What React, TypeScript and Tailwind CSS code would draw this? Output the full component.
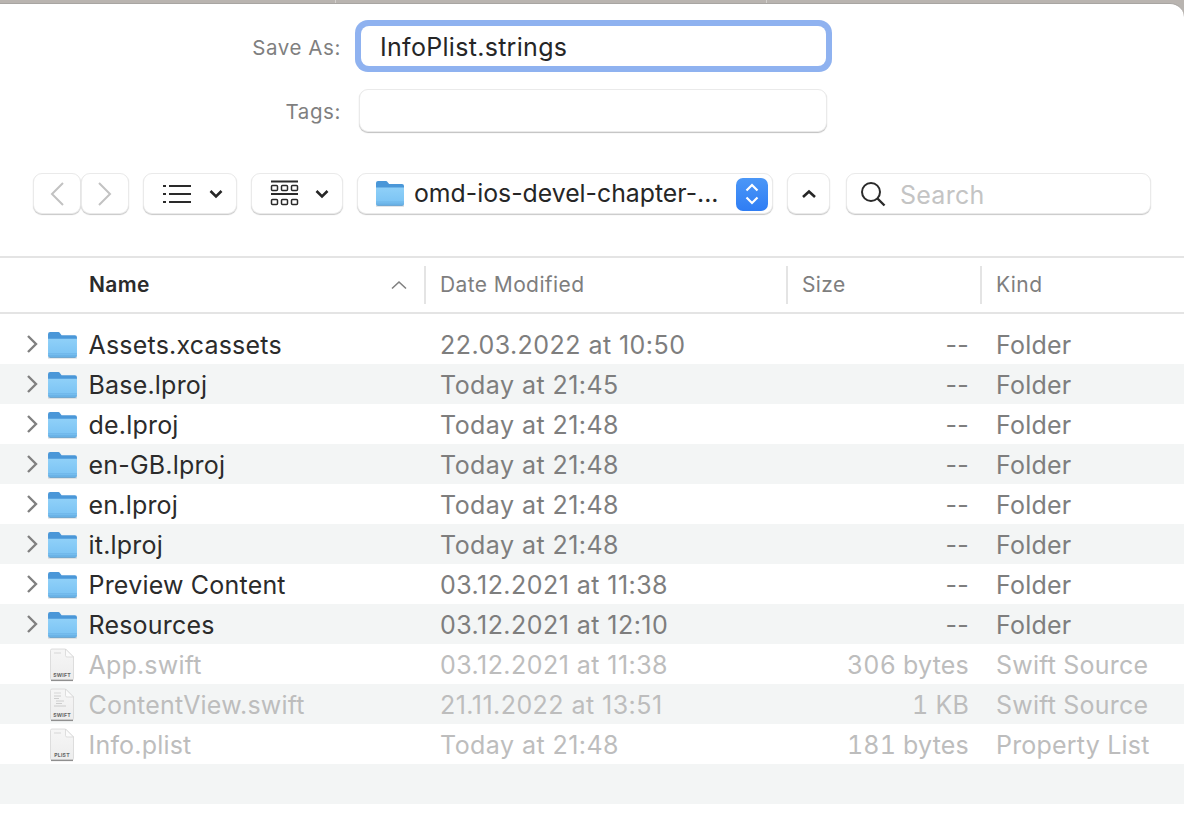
import React from "react";

const font = { fontFamily: "Inter, 'Liberation Sans', sans-serif" };

function Folder({ w = 31, h = 28 }: { w?: number; h?: number }) {
  return (
    <svg width={w} height={h} viewBox="0 0 30 27" className="shrink-0">
      <defs>
        <linearGradient id="fbody" x1="0" y1="0" x2="0" y2="1">
          <stop offset="0" stopColor="#8fd0f8" />
          <stop offset="0.8" stopColor="#7cc4f4" />
          <stop offset="1" stopColor="#62ace2" />
        </linearGradient>
      </defs>
      <path d="M1 5V3a2 2 0 0 1 2-2h7.5c1 0 1.5.4 2 1l1.6 2H27a2 2 0 0 1 2 2v3H1z" fill="#4a97d8" />
      <path d="M1 7.5h28V24a2 2 0 0 1-2 2H3a2 2 0 0 1-2-2z" fill="url(#fbody)" />
      <path d="M1 22h28M1 24h28" stroke="#5ea6dd" strokeWidth="0.7" opacity="0.7" />
      <path d="M1 26h28" stroke="#8d98a3" strokeWidth="0.8" opacity="0.6" />
    </svg>
  );
}

function FileIcon({ label, lines }: { label: string; lines: number }) {
  return (
    <svg width="26" height="34" viewBox="0 0 26 34" className="shrink-0">
      <defs>
        <linearGradient id="fpage" x1="0" y1="0" x2="0" y2="1">
          <stop offset="0" stopColor="#f6f6f6" />
          <stop offset="1" stopColor="#ededed" />
        </linearGradient>
      </defs>
      <path d="M1.5 2.5A1.5 1.5 0 0 1 3 1h13.5L24.5 9v21.5a1.5 1.5 0 0 1-1.5 1.5H3a1.5 1.5 0 0 1-1.5-1.5z" fill="url(#fpage)" stroke="#d6d6d6" strokeWidth="0.8" />
      <path d="M16.5 1v6.5a1.5 1.5 0 0 0 1.5 1.5h6.5z" fill="#fbfbfb" stroke="#d2d2d2" strokeWidth="0.7" />
      <path d="M2 32.4h22" stroke="#8f8f8f" strokeWidth="1.4" />
      <path d="M5 5h7" stroke="#cfcfcf" strokeWidth="0.8" />
      {lines > 1 && <path d="M5 8h7M5 10.5h5M7 13h8M7 15.5h6M5 18h12" stroke="#c4c4c4" strokeWidth="0.8" />}
      <text x="13" y="29" textAnchor="middle" fontSize="5.2" fontWeight="700" fill="#666" fontFamily="Inter, sans-serif">{label}</text>
    </svg>
  );
}

const btn = "bg-white rounded-[9px] border border-[#eaeaea] shadow-[0_1px_1px_rgba(0,0,0,0.22)] h-[41px] flex items-center";

type Row = { name: string; date: string; size: string; kind: string; file?: string; lines?: number };
const rows: Row[] = [
  { name: "Assets.xcassets", date: "22.03.2022 at 10:50", size: "--", kind: "Folder" },
  { name: "Base.lproj", date: "Today at 21:45", size: "--", kind: "Folder" },
  { name: "de.lproj", date: "Today at 21:48", size: "--", kind: "Folder" },
  { name: "en-GB.lproj", date: "Today at 21:48", size: "--", kind: "Folder" },
  { name: "en.lproj", date: "Today at 21:48", size: "--", kind: "Folder" },
  { name: "it.lproj", date: "Today at 21:48", size: "--", kind: "Folder" },
  { name: "Preview Content", date: "03.12.2021 at 11:38", size: "--", kind: "Folder" },
  { name: "Resources", date: "03.12.2021 at 12:10", size: "--", kind: "Folder" },
  { name: "App.swift", date: "03.12.2021 at 11:38", size: "306 bytes", kind: "Swift Source", file: "SWIFT", lines: 1 },
  { name: "ContentView.swift", date: "21.11.2022 at 13:51", size: "1 KB", kind: "Swift Source", file: "SWIFT", lines: 2 },
  { name: "Info.plist", date: "Today at 21:48", size: "181 bytes", kind: "Property List", file: "PLIST", lines: 1 },
];

export default function App() {
  return (
    <div className="w-[1184px] h-[818px] overflow-hidden bg-[#b8b4b0] flex flex-col" style={font}>
      <div className="h-[3px] shrink-0 flex bg-[#b9b4b0]">
        <div className="w-[336px] border-r border-[#d3d0cd]" />
        <div className="w-[431px] border-r border-[#d3d0cd]" />
      </div>
      <div className="flex-1 bg-white rounded-tr-[14px] border-t border-[#a8a5a2] flex flex-col">
        {/* Save as */}
        <div className="flex items-center h-[52px] mt-[16px]">
          <div className="w-[341px] pt-[4px] text-right text-[20.5px] tracking-[0.6px] text-[#7f7f7f]">Save As:</div>
          <div className="ml-[14px] w-[477px] h-[52px] rounded-[13px] bg-[#8fb2f0] p-[6px]">
            <div className="w-full h-full bg-white rounded-[8px] flex items-center pl-[19px] pt-[3px] text-[25px] tracking-[0.3px] text-[#262626]">InfoPlist.strings</div>
          </div>
        </div>
        {/* Tags */}
        <div className="flex items-center mt-[17px] h-[43px]">
          <div className="w-[341px] pt-[4px] text-right text-[20.5px] tracking-[0.6px] text-[#7f7f7f]">Tags:</div>
          <div className="ml-[18px] w-[468px] h-[43px] rounded-[9px] bg-white border border-[#eaeaea] shadow-[0_1px_1px_rgba(0,0,0,0.25)]" />
        </div>
        {/* Toolbar */}
        <div className="flex items-center mt-[41px] h-[41px] pl-[33px]">
          <div className={`${btn} w-[48px] justify-center`}>
            <svg width="18" height="26" viewBox="0 0 18 26" fill="none" stroke="#c2c2c2" strokeWidth="2"><path d="M15 2 4 13l11 11" /></svg>
          </div>
          <div className={`${btn} w-[48px] justify-center`}>
            <svg width="18" height="26" viewBox="0 0 18 26" fill="none" stroke="#c2c2c2" strokeWidth="2"><path d="M3 2l11 11L3 24" /></svg>
          </div>
          <div className={`${btn} w-[94px] ml-[14px] pl-[19px]`}>
            <svg width="28" height="20" viewBox="0 0 28 20" fill="none" stroke="#2a2a2a" strokeWidth="2"><path d="M6 2h22M6 10h22M6 18h22M0 2h3M0 10h3M0 18h3" /></svg>
            <svg width="14" height="10" viewBox="0 0 14 10" fill="none" stroke="#262626" strokeWidth="2.6" className="ml-[18px]"><path d="M1.5 2 7 7.5 12.5 2" /></svg>
          </div>
          <div className={`${btn} w-[92px] ml-[14px] pl-[18px]`}>
            <svg width="30" height="28" viewBox="0 0 30 28" fill="none" stroke="#2a2a2a" strokeWidth="1.5">
              <path d="M1 1.5h27M1 14h27" strokeWidth="1.8" />
              <rect x="1.5" y="5.5" width="6" height="5" rx="1" /><rect x="11.5" y="5.5" width="6" height="5" rx="1" /><rect x="21.5" y="5.5" width="6" height="5" rx="1" />
              <rect x="1.5" y="19.5" width="6" height="5" rx="1" /><rect x="11.5" y="19.5" width="6" height="5" rx="1" /><rect x="21.5" y="19.5" width="6" height="5" rx="1" />
            </svg>
            <svg width="14" height="10" viewBox="0 0 14 10" fill="none" stroke="#262626" strokeWidth="2.6" className="ml-[15px]"><path d="M1.5 2 7 7.5 12.5 2" /></svg>
          </div>
          <div className={`${btn} w-[416px] ml-[14px] pl-[17px]`}>
            <Folder w={30} h={27} />
            <span className="ml-[9px] text-[24.8px] text-[#262626] leading-none">omd-ios-devel-chapter-...</span>
            <div className="ml-auto mr-[4px] mt-[1px] w-[32px] h-[33px] rounded-[7px] bg-gradient-to-b from-[#4b97f7] to-[#2f7df4] flex items-center justify-center">
              <svg width="16" height="26" viewBox="0 0 16 26" fill="none" stroke="white" strokeWidth="2.2"><path d="M2.5 9.5 8 4l5.5 5.5M2.5 16.5 8 22l5.5-5.5" /></svg>
            </div>
          </div>
          <div className={`${btn} w-[43px] ml-[14px] justify-center`}>
            <svg width="16" height="10" viewBox="0 0 16 10" fill="none" stroke="#262626" strokeWidth="2.6"><path d="M2 8 8 2.5 14 8" /></svg>
          </div>
          <div className={`${btn} w-[305px] ml-[16px] pl-[13px]`}>
            <svg width="26" height="26" viewBox="0 0 26 26" fill="none" stroke="#2a2a2a" strokeWidth="2"><circle cx="11" cy="11" r="9" /><path d="m17.5 17.5 7 7" strokeWidth="2.4" /></svg>
            <span className="ml-[14px] pt-[3px] text-[25px] tracking-[0.25px] text-[#c4c4c4] leading-none">Search</span>
          </div>
        </div>
        {/* Header */}
        <div className="mt-[42px] h-[58px] shrink-0 border-y-2 border-[#e4e4e4] flex items-center text-[21px] tracking-[0.4px] text-[#7e7e7e]">
          <div className="w-[426px] h-[38px] flex items-center border-r-2 border-[#e4e4e4] pl-[89px] pr-[17px] justify-between">
            <span className="font-semibold text-[#2b2b2b]">Name</span>
            <svg width="16" height="10" viewBox="0 0 16 10" fill="none" stroke="#808080" strokeWidth="1.6"><path d="M1 8.5 8 2l7 6.5" /></svg>
          </div>
          <div className="w-[362px] h-[38px] flex items-center border-r-2 border-[#e4e4e4] pl-[14px]">Date Modified</div>
          <div className="w-[194px] h-[38px] flex items-center border-r-2 border-[#e4e4e4] pl-[14px]">Size</div>
          <div className="pl-[14px]">Kind</div>
        </div>
        {/* Rows */}
        <div className="mt-[10px]">
          {rows.map((r, i) => {
            const dim = !!r.file;
            return (
              <div key={r.name} className={`h-[40px] flex items-center text-[25px] tracking-[0.2px] ${i % 2 === 1 ? "bg-[#f3f5f5]" : "bg-white"}`}>
                <div className="w-[425px] flex items-center shrink-0">
                  <div className="w-[47px] flex pl-[26px] shrink-0">
                    {!r.file && (
                      <svg width="12" height="20" viewBox="0 0 12 20" fill="none" stroke="#808080" strokeWidth="2.4"><path d="m2 2 8 8-8 8" /></svg>
                    )}
                  </div>
                  <div className="w-[41.5px] shrink-0 flex pt-[2px]">
                    {r.file ? <div className="ml-[2px]"><FileIcon label={r.file} lines={r.lines ?? 1} /></div> : <Folder />}
                  </div>
                  <span className={`pt-[4px] ${dim ? "text-[#bdbdbd]" : "text-[#2b2b2b]"}`}>{r.name}</span>
                </div>
                <div className={`w-[362px] pl-[15px] pt-[4px] shrink-0 tracking-[0.45px] ${dim ? "text-[#bdbdbd]" : "text-[#7e7e7e]"}`}>{r.date}</div>
                <div className={`w-[194px] pr-[12px] pt-[4px] text-right shrink-0 ${dim ? "tabular-nums text-[#bdbdbd]" : "text-[#7e7e7e]"}`}>{r.size}</div>
                <div className={`pl-[15px] pt-[4px] ${dim ? "text-[#bdbdbd]" : "text-[#7e7e7e]"}`}>{r.kind}</div>
              </div>
            );
          })}
          <div className="h-[40px] bg-[#f3f5f5]" />
        </div>
      </div>
    </div>
  );
}
